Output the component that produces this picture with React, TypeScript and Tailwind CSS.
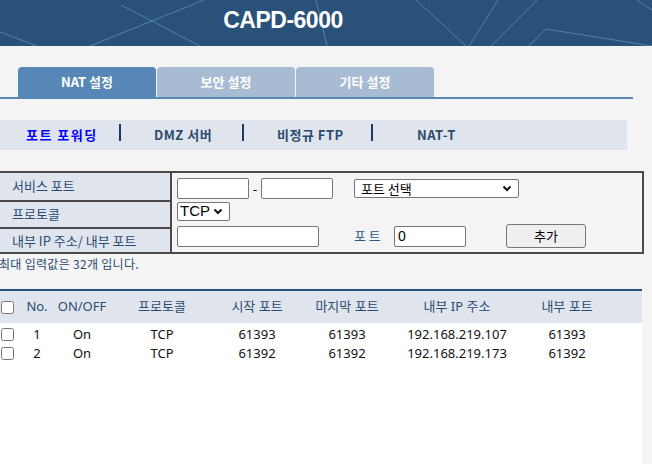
const tabs = [
  { label: "NAT 설정", active: true },
  { label: "보안 설정", active: false },
  { label: "기타 설정", active: false },
];

const rules = [
  { no: 1, state: "On", proto: "TCP", start: "61393", end: "61393", ip: "192.168.219.107", port: "61393" },
  { no: 2, state: "On", proto: "TCP", start: "61392", end: "61392", ip: "192.168.219.173", port: "61392" },
];

const columns = "grid grid-cols-[20px_34px_56px_104px_86px_94px_126px_94px_28px]";

const Chevron = () => (
  <svg width="10" height="7" viewBox="0 0 10 7" className="shrink-0">
    <path d="M1.5 1.5 L5 5 L8.5 1.5" fill="none" stroke="#111" strokeWidth="2" />
  </svg>
);

const HeaderLines = () => (
  <svg width="652" height="46" viewBox="0 0 652 46" className="absolute inset-0">
    <g stroke="#5b87b5" strokeWidth="1" fill="none" opacity="0.9">
      <path d="M121 5 L200 46" />
      <path d="M0 32 L37 46" />
      <path d="M90 46 L204 0" />
      <path d="M316 0 L327 46" />
      <path d="M416 0 L466 46" />
      <path d="M498 0 L469 46" />
      <path d="M537 0 L491 46" />
      <path d="M529 46 L546 29 L652 46" />
      <path d="M637 0 L652 10" />
    </g>
  </svg>
);

// vertical divider between sub menu items
const Bar = () => <span className="inline-block h-[17px] w-[2px] bg-[#1c3a66]" />;

export default function App() {
  return (
    <div className="flex min-h-screen flex-col bg-[#f4f4f4] font-['Noto_Sans','Noto_Sans_CJK_KR',sans-serif]">
      {/* header */}
      <div className="relative h-[46px] overflow-hidden bg-[#29517a]">
        <HeaderLines />
        <div className="relative flex h-full w-[566px] items-center justify-center pb-[6px]">
          <span className="font-['Liberation_Sans',sans-serif] text-[23px] font-bold tracking-[-0.5px] text-white">
            CAPD-6000
          </span>
        </div>
      </div>

      {/* tabs */}
      <div className="mt-[21px] flex w-[633px] gap-[1px] border-b-2 border-[#5787b7] pl-[18px]">
        {tabs.map((t) => (
          <div
            key={t.label}
            className={`flex h-[30px] w-[138px] items-center justify-center rounded-t-[4px] font-['Noto_Sans_CJK_KR',sans-serif] text-[13px] font-bold text-white ${
              t.active ? "bg-[#5787b7]" : "bg-[#a7bbd3]"
            }`}
          >
            {t.label}
          </div>
        ))}
      </div>

      {/* sub menu */}
      <div className="mt-[21px] flex h-[30px] w-[627px] items-center bg-[#e0e5ed] pl-[26px] font-['Noto_Sans_CJK_KR',sans-serif] text-[13px] font-bold tracking-[0.5px]">
        <span className="w-[93px] tracking-[1.5px] text-[#0000ff]">포트 포워딩</span>
        <span className="w-[35px]"><Bar /></span>
        <span className="w-[88px] text-[#2d4b70]">DMZ 서버</span>
        <span className="w-[35px]"><Bar /></span>
        <span className="w-[94px] text-[#2d4b70]">비정규 FTP</span>
        <span className="w-[46px]"><Bar /></span>
        <span className="text-[#2d4b70]">NAT-T</span>
      </div>

      {/* form */}
      <div className="mt-[21px] grid w-[644px] grid-cols-[172px_1fr] border-y-2 border-r-2 border-[#4a4a4a] font-['Noto_Sans_CJK_KR',sans-serif] text-[13px]">
        <div className="flex flex-col border-r-2 border-[#4a4a4a] text-[#2b4a72]">
          <div className="flex h-[27px] items-center bg-[#e0e5ed] pb-[2px] pl-[12px]">서비스 포트</div>
          <div className="flex h-[27px] items-center border-t-2 border-[#4a4a4a] bg-[#e0e5ed] pb-[2px] pl-[12px]">프로토콜</div>
          <div className="flex h-[25px] items-center border-t-2 border-[#4a4a4a] bg-[#e0e5ed] pl-[12px]">내부 IP 주소/ 내부 포트</div>
        </div>
        <div className="flex flex-col pl-[5px] pt-[5px]">
          <div className="flex items-center">
            <input className="h-[21px] w-[72px] rounded-[2px] border border-[#767676] bg-white px-1" />
            <span className="w-[12px] text-center text-black">-</span>
            <input className="h-[21px] w-[72px] rounded-[2px] border border-[#767676] bg-white px-1" />
            <div className="ml-[21px] flex h-[19px] w-[165px] items-center justify-between rounded-[2px] border border-[#767676] bg-white pl-[6px] pr-[6px] text-[13px] text-black">
              <span>포트 선택</span>
              <Chevron />
            </div>
          </div>
          <div className="mt-[3px] flex">
            <div className="flex h-[19px] w-[53px] items-center justify-between rounded-[2px] border border-[#767676] bg-white pl-[2px] pr-[6px] font-['Liberation_Sans',sans-serif] text-[15px] text-black">
              <span>TCP</span>
              <Chevron />
            </div>
          </div>
          <div className="mt-[3px] flex items-center">
            <input className="h-[21px] w-[142px] rounded-[2px] border border-[#767676] bg-white px-1" />
            <span className="ml-[35px] w-[40px] text-[#2b5a8a]">포 트</span>
            <input
              defaultValue="0"
              className="h-[21px] w-[72px] rounded-[2px] border border-[#767676] bg-white px-[3px] font-['Liberation_Sans',sans-serif] text-[14px] text-black"
            />
            <button className="ml-[40px] h-[24px] w-[80px] rounded-[3px] border border-[#767676] bg-[#efefef] text-[13px] text-black">
              추가
            </button>
          </div>
        </div>
      </div>

      {/* note */}
      <div className="h-[35px] pt-[1px] font-['Noto_Sans_CJK_KR',sans-serif] text-[12px] tracking-[0.3px] text-[#2b4a72]">
        <span className="-ml-[1px] block">최대 입력값은 32개 입니다.</span>
      </div>

      {/* list */}
      <div className="flex w-[642px] flex-1 flex-col border-t-2 border-[#2a5080] bg-white text-[13px]">
        <div className={`${columns} h-[32px] items-center bg-[#e0e5ed] text-center text-[#2b4b70]`}>
          <div className="flex pl-[1px]">
            <input type="checkbox" className="m-0 h-[13px] w-[13px]" />
          </div>
          <div>No.</div>
          <div>ON/OFF</div>
          <div>프로토콜</div>
          <div>시작 포트</div>
          <div>마지막 포트</div>
          <div>내부 IP 주소</div>
          <div>내부 포트</div>
          <div />
        </div>
        <div className="pt-[2px]">
          {rules.map((r) => (
            <div key={r.no} className={`${columns} h-[19px] items-center text-center text-[#111]`}>
              <div className="flex pl-[1px]">
                <input type="checkbox" className="m-0 h-[13px] w-[13px]" />
              </div>
              <div>{r.no}</div>
              <div>{r.state}</div>
              <div>{r.proto}</div>
              <div>{r.start}</div>
              <div>{r.end}</div>
              <div>{r.ip}</div>
              <div>{r.port}</div>
              <div />
            </div>
          ))}
        </div>
      </div>
    </div>
  );
}
